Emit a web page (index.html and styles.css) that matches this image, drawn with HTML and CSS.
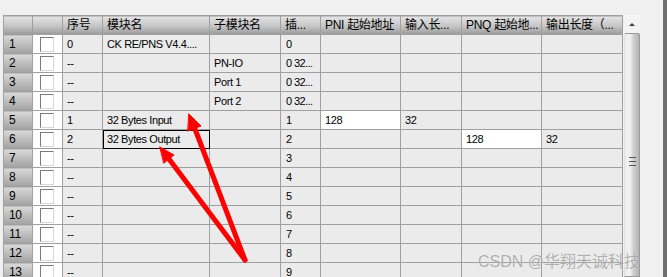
FILE: index.html
```html
<!DOCTYPE html>
<html>

<head>
  <meta charset="utf-8">
  <meta name="viewport" content="width=device-width">
  <title>模块列表</title>
  <link rel="stylesheet" href="styles.css">
</head>

<body>
  <div class="frame">
    <table class="grid">
      <colgroup>
        <col class="c-row">
        <col class="c-chk">
        <col class="c-no">
        <col class="c-mod">
        <col class="c-sub">
        <col class="c-slot">
        <col class="c-pni">
        <col class="c-inlen">
        <col class="c-pnq">
        <col class="c-outlen">
      </colgroup>
      <thead>
        <tr>
          <th></th>
          <th></th>
          <th>序号</th>
          <th>模块名</th>
          <th>子模块名</th>
          <th>插...</th>
          <th>PNI 起始地址</th>
          <th>输入长...</th>
          <th>PNQ 起始地...</th>
          <th>输出长度（...</th>
        </tr>
      </thead>
      <tbody>
        <tr><th>1</th><td class="chk"><span class="box"></span></td><td>0</td><td>CK RE/PNS V4.4....</td><td></td><td class="slot">0</td><td></td><td></td><td></td><td></td></tr>
        <tr><th>2</th><td class="chk"><span class="box"></span></td><td>--</td><td></td><td>PN-IO</td><td class="slot">0 32...</td><td></td><td></td><td></td><td></td></tr>
        <tr><th>3</th><td class="chk"><span class="box"></span></td><td>--</td><td></td><td>Port 1</td><td class="slot">0 32...</td><td></td><td></td><td></td><td></td></tr>
        <tr><th>4</th><td class="chk"><span class="box"></span></td><td>--</td><td></td><td>Port 2</td><td class="slot">0 32...</td><td></td><td></td><td></td><td></td></tr>
        <tr><th>5</th><td class="chk"><span class="box"></span></td><td>1</td><td>32 Bytes Input</td><td></td><td class="slot">1</td><td class="edit">128</td><td>32</td><td></td><td></td></tr>
        <tr><th>6</th><td class="chk"><span class="box"></span></td><td>2</td><td class="focus">32 Bytes Output</td><td></td><td class="slot">2</td><td></td><td></td><td class="edit">128</td><td>32</td></tr>
        <tr><th>7</th><td class="chk"><span class="box"></span></td><td>--</td><td></td><td></td><td class="slot">3</td><td></td><td></td><td></td><td></td></tr>
        <tr><th>8</th><td class="chk"><span class="box"></span></td><td>--</td><td></td><td></td><td class="slot">4</td><td></td><td></td><td></td><td></td></tr>
        <tr><th>9</th><td class="chk"><span class="box"></span></td><td>--</td><td></td><td></td><td class="slot">5</td><td></td><td></td><td></td><td></td></tr>
        <tr><th>10</th><td class="chk"><span class="box"></span></td><td>--</td><td></td><td></td><td class="slot">6</td><td></td><td></td><td></td><td></td></tr>
        <tr><th>11</th><td class="chk"><span class="box"></span></td><td>--</td><td></td><td></td><td class="slot">7</td><td></td><td></td><td></td><td></td></tr>
        <tr><th>12</th><td class="chk"><span class="box"></span></td><td>--</td><td></td><td></td><td class="slot">8</td><td></td><td></td><td></td><td></td></tr>
        <tr><th>13</th><td class="chk"><span class="box"></span></td><td>--</td><td></td><td></td><td class="slot">9</td><td></td><td></td><td></td><td></td></tr>
      </tbody>
    </table>

    <div class="scrollbar">
      <div class="sb-up"><span class="tri"></span></div>
      <div class="sb-thumb"><span class="grip"></span></div>
    </div>
  </div>

  <!-- annotation arrows drawn over the grid -->
  <svg class="arrows" width="667" height="277" viewBox="0 0 667 277">
    <g fill="#ff0000" stroke="#ff0000" stroke-width="5" stroke-linecap="round">
      <line x1="245" y1="260" x2="195" y2="129" />
      <polygon stroke-width="1" points="189,114 201,126 188,131" />
      <line x1="245" y1="260" x2="169" y2="159" />
      <polygon stroke-width="1" points="160,147 174,155 164,163" />
    </g>
  </svg>

  <div class="watermark">CSDN @华翔天诚科技</div>
</body>

</html>
```

FILE: styles.css
```css
body {
  margin: 0;
  background-color: #f0f0f0;
  font-family: "Liberation Sans", "Noto Sans CJK SC", sans-serif;
  font-size: 11px;
  letter-spacing: -0.4px;
  color: #000;
  overflow: hidden;
}

.frame {
  width: 667px;
  height: 277px;
  box-sizing: border-box;
  padding: 15px 0 0 3px;
  border-right: 4px solid #6e6e6e;
  display: flex;
  align-items: flex-start;
  overflow: hidden;
}

.grid {
  border-collapse: collapse;
  table-layout: fixed;
  width: 620px;
  flex-shrink: 0;
}

.c-row { width: 29px; }
.c-chk { width: 30px; }
.c-no { width: 40px; }
.c-mod { width: 107px; }
.c-sub { width: 71px; }
.c-slot { width: 40px; }
.c-pni { width: 80px; }
.c-inlen { width: 61px; }
.c-pnq { width: 80px; }
.c-outlen { width: 81px; }

.grid tr {
  height: 19px;
}

.grid th,
.grid td {
  border: 1px solid #a0a0a0;
  padding: 0 4px;
  white-space: nowrap;
  overflow: hidden;
  text-align: left;
  vertical-align: middle;
  font-weight: normal;
  line-height: 17px;
}

.grid td {
  background-color: #ebebeb;
}

.grid thead th {
  font-size: 12px;
  letter-spacing: -0.3px;
  background: linear-gradient(#e4e4e4, #c4c4c4 55%, #9a9a9a);
}

.grid tbody th {
  padding-left: 5px;
  font-size: 12px;
  background: linear-gradient(#d9d9d9, #bdbdbd 50%, #a2a2a2);
}

.grid td.chk {
  background-color: #fff;
  padding: 0 0 0 7px;
}

.box {
  display: block;
  width: 12px;
  height: 13px;
  margin-top: 1px;
  background-color: #fff;
  border-top: 1px solid #7a7a7a;
  border-left: 1px solid #7a7a7a;
  border-right: 1px solid #d8d8d8;
  border-bottom: 1px solid #d8d8d8;
}

.grid td.slot {
  padding: 0 0 0 5px;
  letter-spacing: -0.6px;
}

.grid td.edit {
  background-color: #fff;
}

.grid td.focus {
  outline: 1px solid #000;
  outline-offset: -1px;
}

.scrollbar {
  width: 16px;
  height: 262px;
  margin-left: 1px;
  display: flex;
  flex-direction: column;
}

.sb-up {
  height: 17px;
  background-color: #f3f3f3;
  border-top: 1px solid #fafafa;
  display: flex;
  justify-content: center;
  align-items: center;
}

.tri {
  width: 0;
  height: 0;
  border-left: 3px solid transparent;
  border-right: 3px solid transparent;
  border-bottom: 3px solid #404040;
}

.sb-thumb {
  flex: 1;
  box-sizing: border-box;
  border: 1px solid #9a9a9a;
  border-left-color: #e0e0e0;
  border-radius: 2px 2px 0 0;
  background: linear-gradient(90deg, #ececec, #f2f2f2 35%, #d0d0d0 60%, #b4b4b4);
  position: relative;
}

.grip {
  position: absolute;
  left: 4px;
  top: 123px;
  width: 7px;
  height: 7px;
  border-top: 1px solid #555;
  border-bottom: 1px solid #555;
  background: linear-gradient(transparent 3px, #555 3px, #555 4px, transparent 4px);
}

.arrows {
  position: absolute;
  left: 0;
  top: 0;
  pointer-events: none;
}

.watermark {
  position: absolute;
  left: 478px;
  top: 248px;
  font-size: 16px;
  letter-spacing: 0;
  color: rgba(110, 110, 110, 0.55);
  text-shadow: 0 0 1px rgba(255, 255, 255, 0.8);
}
```
